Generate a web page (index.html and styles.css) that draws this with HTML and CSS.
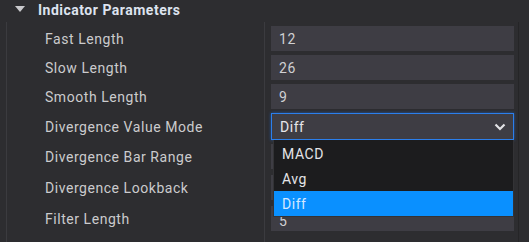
FILE: index.html
```html
<!DOCTYPE html>
<html>
<head>
<link rel="stylesheet" href="styles.css">
</head>
<body>
  <div class="header">
    <svg class="caret" width="10" height="6" viewBox="0 0 10 6"><polygon points="0,0 10,0 5,6" fill="#c9c9cc"/></svg>
    <div class="title">Indicator Parameters</div>
  </div>

  <div class="panel">
    <div class="row">
      <div class="label">Fast Length</div>
      <div class="value"><div class="field">12</div></div>
    </div>
    <div class="row">
      <div class="label">Slow Length</div>
      <div class="value"><div class="field">26</div></div>
    </div>
    <div class="row">
      <div class="label">Smooth Length</div>
      <div class="value"><div class="field">9</div></div>
    </div>
    <div class="row">
      <div class="label">Divergence Value Mode</div>
      <div class="value">
        <div class="field select">Diff
          <svg class="chev" width="12" height="8" viewBox="0 0 12 8"><polyline points="1.5,1.5 6,6 10.5,1.5" fill="none" stroke="#e2e2e6" stroke-width="2.2"/></svg>
        </div>
        <div class="menu">
          <div class="item">MACD</div>
          <div class="item">Avg</div>
          <div class="item active">Diff</div>
        </div>
      </div>
    </div>
    <div class="row">
      <div class="label">Divergence Bar Range</div>
      <div class="value"><div class="field"></div></div>
    </div>
    <div class="row wide">
      <div class="label">Divergence Lookback</div>
      <div class="value"><div class="field"></div></div>
    </div>
    <div class="row wide">
      <div class="label">Filter Length</div>
      <div class="value"><div class="field low">5</div></div>
    </div>
    <div class="row tail">
      <div class="label"></div>
      <div class="value"></div>
    </div>
  </div>
</body>
</html>
```

FILE: styles.css
```css
body {
	margin: 0;
	background: #2d2d30;
	font-family: Roboto, "Noto Sans", sans-serif;
	font-size: 14px;
	letter-spacing: 0.55px;
	color: #cbcbcd;
	width: 529px;
	height: 242px;
	overflow: hidden;
}

.header {
	display: flex;
	align-items: center;
	height: 22px;
	padding-left: 15px;
}

.caret {
	margin-top: -4px;
}

.title {
	margin-left: 13px;
	font-weight: bold;
	letter-spacing: 0.5px;
	color: #dde3ef;
	margin-top: -3px;
}

.panel {
	margin-left: 6px;
	margin-right: 10px;
	border-left: 1px solid #3b3b3f;
	border-right: 1px solid #252527;
}

.row {
	display: flex;
}

.label {
	width: 219px;
	padding-left: 38px;
	padding-top: 4px;
	border-right: 1px solid #3b3b3f;
	display: flex;
	align-items: center;
}

.wide .label,
.wide .value {
	padding-top: 6px;
}

.value {
	position: relative;
	padding-top: 4px;
	padding-left: 6px;
}

.field {
	width: 235px;
	height: 25px;
	padding-left: 8px;
	background: #3e3d44;
	display: flex;
	align-items: center;
	color: #d0d0d3;
}

.field.low {
	padding-top: 4px;
	height: 21px;
}

.select {
	height: 25px;
	width: 233px;
	border: 1px solid #2b7fec;
	box-shadow: 0 0 3px rgba(30, 120, 255, 0.55);
	color: #e6e6ea;
	position: relative;
}

.chev {
	position: absolute;
	right: 7px;
	top: 9px;
}

.menu {
	position: absolute;
	top: 31px;
	left: 8px;
	width: 239px;
	padding-top: 1px;
	background: #1c1c1e;
	border: 1px solid #333336;
	border-top: none;
	z-index: 10;
}

.item {
	height: 25px;
	padding-left: 8px;
	display: flex;
	align-items: center;
	color: #e4e4e8;
}

.item.active {
	height: 25px;
	background: #0a90ff;
	color: #d5e8ff;
}

.tail .label,
.tail .value {
	height: 7px;
}
```
